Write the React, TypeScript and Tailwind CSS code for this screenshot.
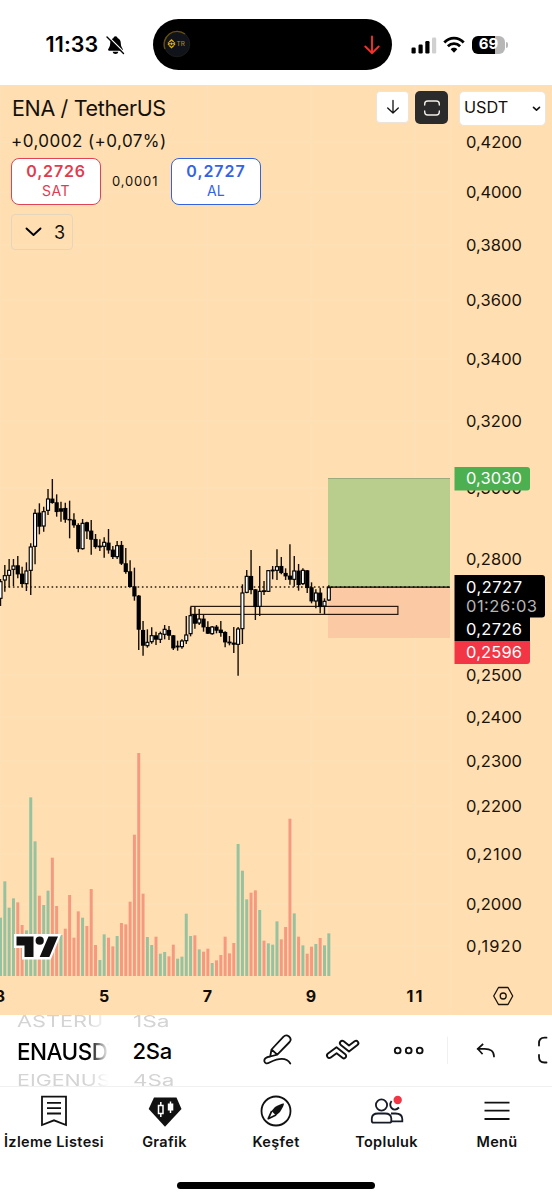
import React from "react";

type Bar = [number, number, number, number, 0 | 1];

const STEP = 4.32;
const barX = (i: number) => 0.5 + i * STEP;

// [high, body top, body bottom, low, rising], in thirds of a pixel
const firstLeg: Bar[] = [
  [357, 365, 415, 438, 1], [315, 347, 360, 395, 1], [297, 331, 346, 382, 1], [297, 318, 328, 378, 1],
  [288, 317, 342, 355, 0], [320, 342, 371, 380, 0], [307, 333, 371, 393, 1], [250, 261, 331, 405, 1],
  [148, 160, 259, 313, 1], [130, 159, 199, 223, 0], [140, 155, 198, 215, 1], [87, 117, 151, 165, 1],
  [57, 117, 128, 131, 0], [103, 128, 155, 170, 0], [125, 146, 154, 185, 0], [128, 145, 178, 188, 0],
  [122, 178, 180, 235, 0], [160, 180, 195, 203, 0], [190, 196, 266, 277, 0], [177, 190, 266, 269, 1],
  [185, 188, 213, 237, 0], [180, 213, 238, 284, 0], [222, 238, 260, 266, 0], [238, 258, 261, 273, 0],
  [232, 247, 259, 293, 1], [207, 249, 270, 281, 0], [258, 270, 290, 297, 0], [243, 257, 290, 297, 1],
  [243, 256, 310, 315, 0], [264, 311, 335, 341, 0], [301, 335, 380, 381, 0], [323, 380, 408, 422, 0],
  [405, 408, 508, 570, 0], [483, 511, 556, 587, 0], [508, 547, 557, 563, 1], [502, 527, 545, 551, 1],
  [515, 527, 538, 555, 0], [515, 521, 538, 549, 1], [495, 508, 523, 538, 1],
];
const secondLeg: Bar[] = [
  [318, 331, 346, 360, 0], [345, 347, 384, 390, 0], [362, 378, 381, 392, 0], [358, 363, 380, 386, 1],
  [288, 345, 362, 372, 1], [262, 287, 341, 349, 1], [258, 284, 310, 326, 0], [267, 297, 309, 315, 1],
  [284, 297, 321, 335, 0], [304, 322, 340, 342, 0], [318, 321, 341, 344, 1], [315, 321, 331, 340, 0],
  [303, 330, 338, 350, 0], [334, 337, 366, 382, 0], [348, 366, 369, 376, 0], [321, 369, 373, 399, 0],
  [321, 327, 373, 467, 1], [193, 219, 326, 372, 1], [150, 169, 217, 220, 1], [90, 169, 209, 223, 0],
  [207, 209, 260, 300, 0], [138, 214, 259, 288, 1], [183, 212, 215, 225, 0], [150, 152, 214, 216, 1],
  [138, 150, 153, 178, 0], [88, 140, 151, 180, 1], [111, 139, 158, 163, 0], [145, 160, 168, 180, 0],
  [73, 168, 178, 194, 0], [108, 153, 178, 200, 1], [132, 153, 194, 212, 0], [145, 151, 191, 195, 1],
  [150, 152, 203, 219, 0], [187, 203, 243, 250, 0], [208, 219, 243, 265, 1], [203, 219, 260, 280, 0],
  [235, 244, 258, 282, 1], [196, 203, 240, 243, 1],
];
const candles = [
  ...firstLeg.map((b) => ({ b, base: 460 })),
  ...secondLeg.map((b) => ({ b, base: 520 })),
];

const volumes =
  "g175 g284 g205 g233 r221 r153 g137 g536 g404 r241 g213 g256 r355 r210 g123 r142 r243 r115 r194 g175 r150 r261 r93 g48 g125 r115 r89 g120 r159 r155 r223 r424 r669 r247 g117 g93 r118 g67 g72 r59 r94 g52 g58 g187 g120 r122 g80 r73 r82 g39 r47 r63 r118 r68 r99 g396 g316 g230 r250 r257 g198 r106 g98 g94 g164 r110 r147 r472 g188 r118 g92 r67 r88 g96 r114 g92 g128"
    .split(" ")
    .map((v) => ({ up: v[0] === "g", h: Number(v.slice(1)) / 3 }));

const prices: [string, number][] = [
  ["0,4200", 142], ["0,4000", 192], ["0,3800", 245], ["0,3600", 300], ["0,3400", 359], ["0,3200", 421],
  ["0,3000", 488], ["0,2800", 558.5], ["0,2500", 675], ["0,2400", 717], ["0,2300", 761], ["0,2200", 806],
  ["0,2100", 854], ["0,2000", 904], ["0,1920", 946],
];

function PriceText({ y, children, fill = "#1c1208", w = 56 }: { y: number; children: string; fill?: string; w?: number }) {
  return (
    <text x="466" y={y + 6} fontSize="16.5" fill={fill} textLength={w}>
      {children}
    </text>
  );
}

function Chart() {
  return (
    <svg className="block h-[930px] w-[552px]" viewBox="0 85 552 930" fontFamily="Inter, sans-serif">
      <rect y="85" width="552" height="930" fill="#ffdfb2" />
      <g stroke="#fce1b8" strokeWidth="1">
        {[0, 103.5, 207.5, 311, 415].map((x) => <path key={x} d={`M${x} 85V976`} />)}
        {prices.map(([p, y]) => <path key={p} d={`M0 ${y}H450`} />)}
        <path d="M451 85V1015" />
      </g>
      {volumes.map((v, i) => (
        <rect key={i} x={barX(i) - 1.5} y={976 - v.h} width="3" height={v.h} fill={v.up ? "#97c29f" : "#f59a80"} />
      ))}
      <rect x="328" y="478" width="122" height="109" fill="#b9ce8d" />
      <path d="M328 478.5H450" stroke="#9cab7b" />
      <rect x="328" y="587" width="122" height="51" fill="#fbcaa5" />
      <path d="M0 587H450" stroke="#2a1c0c" strokeWidth="1.4" strokeDasharray="1.6 2.7" />
      <path d="M328 587.2H450" stroke="#000" strokeWidth="1.3" />
      <rect x="190.9" y="606.4" width="207" height="8" fill="none" stroke="#2a190c" strokeWidth="1.2" />
      {candles.map(({ b: [hi, top, bot, lo, up], base }, i) => {
        const x = barX(i);
        const y = (v: number) => base + v / 3;
        return (
          <g key={i}>
            <path d={`M${x} ${y(hi)}V${y(lo)}`} stroke="#160e04" strokeWidth="1.4" />
            {up ? (
              <rect x={x - 1.5} y={y(top)} width="3" height={Math.max(1.5, (bot - top) / 3)} fill="#fff" stroke="#000" strokeWidth="1.15" />
            ) : (
              <rect x={x - 2.1} y={y(top) - 0.4} width="4.2" height={Math.max(1.2, (bot - top) / 3 + 0.8)} fill="#000" />
            )}
          </g>
        );
      })}
      {prices.map(([p, y]) => <PriceText key={p} y={y}>{p}</PriceText>)}
      <path d="M454.500 467H527q3 0 3 3V487.500q0 3-3 3H454.500z" fill="#4caf50" />
      <path d="M454.500 641H530V661q0 3-3 3H454.500z" fill="#f23645" />
      <path d="M454.500 575H542q3 0 3 3V614.500q0 3-3 3H530V641H454.500z" fill="#000" />
      <PriceText y={478} fill="#fff">0,3030</PriceText>
      <PriceText y={586.5} fill="#fff">0,2727</PriceText>
      <PriceText y={605.5} fill="#b5b5b5" w={71}>01:26:03</PriceText>
      <PriceText y={629} fill="#fff">0,2726</PriceText>
      <PriceText y={652} fill="#fff">0,2596</PriceText>
      <g fontSize="16" fontWeight="700" fill="#120c04" textAnchor="middle">
        <text x="0" y="1002">3</text>
        <text x="104" y="1002">5</text>
        <text x="207.5" y="1002">7</text>
        <text x="311" y="1002">9</text>
        <text x="415.5" y="1002" letterSpacing="2">11</text>
      </g>
      <g fill="none" stroke="#1c140a" strokeWidth="1.3" strokeLinejoin="round">
        <path d="M498.500 987.500H508L512.700 996L508 1004.500H498.500L493.700 996Z" />
        <circle cx="503.200" cy="996" r="3" />
      </g>
      <path d="M14 934H61.300L50.800 959.500H22V948H14Z" fill="#fff" />
      <path d="M16.500 936.500H33.500V957H24.500V945.500H16.500ZM48.500 936.500H58L49.300 957H39.700Z" fill="#111" />
      <circle cx="39.700" cy="940.700" r="4.100" fill="#111" />
    </svg>
  );
}

function StatusBar() {
  return (
    <header className="flex h-[85px] items-start bg-white">
      <div className="mt-[19px] flex h-[51px] w-[153px] items-center pl-[45.500px]">
        <span className="w-[54.500px] whitespace-nowrap text-[21.500px] font-semibold tracking-[0.100px] text-black">11:33</span>
        <svg className="ml-[6px] h-[20px] w-[19px]" viewBox="0 0 19 20">
          <path d="M9.500 1.200C10.700 1.200 11.400 2 11.500 2.900C14 3.800 14.800 6 14.800 8.500C14.800 12 16.600 13.200 16.900 14.600C17 15.300 16.500 15.700 15.800 15.700H3.100C2.300 15.700 1.900 15.200 2.100 14.600C2.500 13.200 4.100 12 4.200 8.500C4.200 6 5 3.800 7.500 2.900C7.700 2 8.300 1.200 9.500 1.200ZM6.700 16.800H12.300C12 18.200 11 19 9.500 19S7 18.200 6.700 16.800Z" fill="#000" />
          <path d="M1.700 1L18.500 17.700" stroke="#fff" strokeWidth="1.300" />
          <path d="M1 2L17.500 18.500" stroke="#000" strokeWidth="1.400" strokeLinecap="round" />
        </svg>
      </div>
      <div className="mt-[19px] flex h-[51px] w-[239px] items-center justify-between rounded-full bg-black pl-[10px] pr-[12px]">
        <svg className="h-[28px] w-[28px] -translate-y-px" viewBox="0 0 28 28">
          <circle cx="14" cy="14" r="12.800" fill="#11131a" stroke="#1c1b1a" />
          <path d="M2 19A13 13 0 0 1 22 4" fill="none" stroke="#66500d" strokeWidth="1.400" />
          <path d="M6.300 12L8.500 9.800L10.700 12M6.300 15.500L8.500 17.700L10.700 15.500M5 12.500L6.300 13.800L5 15.100M12 12.500L10.700 13.800L12 15.100" fill="none" stroke="#e3b20a" strokeWidth="1.300" />
          <path d="M8.500 12.300L10 13.800L8.500 15.300L7 13.800Z" fill="#e3b20a" />
          <text x="13.600" y="16" fontSize="6.300" fontWeight="500" fontFamily="Inter, sans-serif" fill="#a88318">TR</text>
        </svg>
        <svg className="h-[20px] w-[16px]" viewBox="0 0 16 20" fill="none" stroke="#f5322b" strokeWidth="1.900" strokeLinecap="round" strokeLinejoin="round">
          <path d="M8 1.500V18.200M1.300 11.500L8 18.200L14.700 11.500" />
        </svg>
      </div>
      <div className="mt-[35px] flex h-[19px] items-center pl-[19px]">
        <svg className="h-[18px] w-[26px]" viewBox="0 0 26 18">
          <rect x="0.500" y="11.500" width="4.200" height="6" rx="1.200" />
          <rect x="7.500" y="8.500" width="4.200" height="9" rx="1.200" />
          <rect x="14.300" y="5" width="4.200" height="12.500" rx="1.200" />
          <rect x="21" y="1.500" width="4.200" height="16" rx="1.200" fill="#d0d0d0" />
        </svg>
        <svg className="ml-[6px] h-[18px] w-[22px]" viewBox="0 0 22 18" fill="none" stroke="#000" strokeWidth="2.700">
          <path d="M1.300 6.500C6.700 0.700 15.300 0.700 20.700 6.500M4.900 10.300C8.300 6.700 13.700 6.700 17.100 10.300" />
          <path d="M7.700 13.200C9.600 11.300 12.400 11.300 14.300 13.200L11 16.700Z" fill="#000" stroke="none" />
        </svg>
        <div className="ml-[7px] flex h-[18px] w-[33px] items-center justify-center rounded-[6px] bg-[linear-gradient(90deg,#000_69%,#b7b7b7_69%)] text-[15px] font-bold text-white">69</div>
        <div className="ml-[1px] h-[6px] w-[2px] rounded-r bg-[#b7b7b7]" />
      </div>
    </header>
  );
}

function ChartHeader() {
  return (
    <div className="absolute left-0 top-0 w-full text-[#15100a]">
      <div className="flex h-[48px] items-start pl-[12px] pt-[6px]">
        <h1 className="w-[364px] pt-[2px] text-[21.500px] leading-[30px] tracking-[-0.350px]">ENA / TetherUS</h1>
        <button className="flex h-[32px] w-[33px] items-center justify-center rounded-[4px] border border-[#ece4da] bg-white">
          <svg className="h-[16px] w-[14px]" viewBox="0 0 14 16" fill="none" stroke="#111" strokeWidth="1.300" strokeLinecap="round" strokeLinejoin="round">
            <path d="M7 1.500V14M1.700 9L7 14L12.300 9" />
          </svg>
        </button>
        <button className="ml-[6px] flex h-[33px] w-[33px] items-center justify-center rounded-[5px] bg-[#2b2b2b]">
          <svg className="h-[18px] w-[18px]" viewBox="0 0 18 18" fill="none" stroke="#f3eee7" strokeWidth="1.400" strokeLinecap="round">
            <path d="M1.700 6V5Q1.700 2 4.700 2H13.300Q16.300 2 16.300 5V6M1.700 12V13Q1.700 16 4.700 16H13.300Q16.300 16 16.300 13V12" />
          </svg>
        </button>
        <button className="ml-[11px] flex h-[35px] w-[87px] items-center justify-between rounded-[5px] border border-[#ebe5df] bg-white pl-[4px] pr-[4px] text-[16.300px]">
          <span className="-translate-y-px">USDT</span>
          <svg className="h-[6px] w-[9px]" viewBox="0 0 9 6" fill="none" stroke="#111" strokeWidth="1.600" strokeLinecap="round" strokeLinejoin="round">
            <path d="M1.500 1.400L4.500 4.200L7.500 1.400" />
          </svg>
        </button>
      </div>
      <div className="flex h-[25px] items-center pl-[11px] text-[17px] leading-5 tracking-[0.450px]">
        <span className="-translate-y-[5px]">+0,0002 (+0,07%)</span>
      </div>
      <div className="flex items-center pl-[11px]">
        <button className="flex h-[47px] w-[90px] flex-col items-center rounded-[8px] border-[1.500px] border-[#e04256] bg-white pt-[2px] text-[#e23b4f]">
          <span className="text-[16px] font-semibold leading-[21px] tracking-[0.800px]">0,2726</span>
          <span className="text-[14px] leading-[17px] tracking-[0.500px]">SAT</span>
        </button>
        <span className="w-[70px] pl-[11px] text-[13px] tracking-[0.850px]">0,0001</span>
        <button className="flex h-[47px] w-[90px] flex-col items-center rounded-[8px] border-[1.500px] border-[#3563de] bg-white pt-[2px] text-[#3563e2]">
          <span className="text-[16px] font-semibold leading-[21px] tracking-[0.950px]">0,2727</span>
          <span className="text-[14px] leading-[17px] tracking-[0.200px]">AL</span>
        </button>
      </div>
      <button className="ml-[11px] mt-[9px] flex h-[36px] w-[62px] items-center rounded-[4px] border-[1.500px] border-[#e6d5bd] pl-[13px] text-[18px]">
        <svg className="h-[10px] w-[17px]" viewBox="0 0 17 10" fill="none" stroke="#000" strokeWidth="1.900" strokeLinecap="round" strokeLinejoin="round">
          <path d="M1.500 1.500L8.500 8L15.500 1.500" />
        </svg>
        <span className="ml-[12px]">3</span>
      </button>
    </div>
  );
}

function Toolbar() {
  return (
    <div className="flex h-[72px] overflow-hidden border-b border-[#f0f0f0] bg-white">
      <div className="w-[109px] overflow-hidden pl-[17px] [mask-image:linear-gradient(90deg,#000_82%,transparent_100%)]">
        <div className="h-[14px] origin-left scale-x-[1.360] whitespace-nowrap text-[16px] leading-[12px] text-[#d4d4d4]">ASTERU</div>
        <div className="h-[44px] whitespace-nowrap text-[22.500px] font-medium leading-[45px] tracking-[-0.500px] text-black">ENAUSDT</div>
        <div className="origin-left scale-x-[1.340] whitespace-nowrap text-[16px] leading-[14px] text-[#d4d4d4]">EIGENUS</div>
      </div>
      <div className="w-[80px] pl-[23.500px]">
        <div className="h-[14px] origin-left scale-x-[1.420] text-[16px] leading-[12px] text-[#d4d4d4]">1Sa</div>
        <div className="h-[44px] text-[22px] font-medium leading-[45px] tracking-[-0.300px] text-black">2Sa</div>
        <div className="origin-left scale-x-[1.400] text-[16px] leading-[14px] text-[#d4d4d4]">4Sa</div>
      </div>
      <svg className="h-[71px] w-[363px]" viewBox="189 1015 363 71" fill="none" stroke="#111" strokeWidth="1.800" strokeLinecap="round" strokeLinejoin="round">
        <path d="M270.200 1056.500L271.500 1049.500L283.300 1036.800Q286 1034 289 1036.500Q292 1039.300 289.600 1042L277.300 1054.600ZM271.500 1049.500L277.300 1054.600M270.200 1056.500Q264 1057.500 264.300 1061Q265.200 1065 270 1062.300Q285 1055 290.300 1063.500" />
        <path d="M328 1053.600L336.500 1047.300L345.300 1054.200A2.300 2.300 0 0 1 342.400 1057.800L336.600 1053.200L330.800 1057.500A2.300 2.300 0 0 1 328 1053.600Z" strokeWidth="1.900" />
        <path d="M340.800 1044.900A2.300 2.300 0 0 1 343.700 1041.300L349 1045.500L354.600 1041.300A2.300 2.300 0 0 1 357.400 1045L349 1051.400Z" strokeWidth="1.900" />
        <g strokeWidth="1.900">
          <circle cx="397.700" cy="1050.500" r="2.900" /><circle cx="408.700" cy="1050.500" r="2.900" /><circle cx="419.700" cy="1050.500" r="2.900" />
        </g>
        <path d="M447.500 1037V1063.500" stroke="#f0f0f0" strokeWidth="1" />
        <path d="M482.500 1044.500L477.700 1048.800L482 1053.500M477.700 1048.800H484Q494 1048.500 494 1056.500" strokeLinecap="square" strokeWidth="1.700" />
        <path d="M546.500 1037.700H544.500Q539 1037.700 539 1043.500V1045.500M539 1055V1057Q539 1062.500 544.500 1062.500H546.500" />
      </svg>
    </div>
  );
}

function NavIcon({ kind }: { kind: string }) {
  return (
    <svg className="h-[36px] w-[40px]" viewBox="0 0 40 36" fill="none" stroke="#111" strokeWidth="1.800" strokeLinejoin="miter">
      {kind === "list" && <path d="M8 3.700H32V32L20 27.300L8 32ZM13 9.800H27M13 15.200H27M13 20.500H27" />}
      {kind === "chart" && (
        <>
          <path d="M9 4.500H31.500L36.500 16L20 33.800L3.700 16Z" fill="#111" stroke="none" />
          <path d="M13.500 12.500H18V20.500H13.500ZM15.800 9V12.500M15.800 20.500V24" stroke="#fff" strokeWidth="1.500" />
          <path d="M25.500 8.500V20" stroke="#fff" strokeWidth="1.500" />
          <rect x="22.800" y="10.500" width="5.500" height="7" fill="#fff" stroke="none" />
        </>
      )}
      {kind === "compass" && (
        <>
          <circle cx="20" cy="18" r="14.500" />
          <path d="M28 10.500Q26 9.800 19 14L15.500 18L20 22.500L24 19Q28 12.500 28 10.500Z" fill="#111" stroke="none" />
          <path d="M15.700 18L12.300 25.700L20 22" strokeLinejoin="round" />
        </>
      )}
      {kind === "people" && (
        <g stroke="#171b28">
          <circle cx="14.500" cy="12" r="5.600" />
          <path d="M4.800 28V25.500Q5 20.500 11 20.500H18Q24 20.500 24.300 25.500V28Q24.300 29.700 22.500 29.700H6.500Q4.800 29.700 4.800 28Z" />
          <path d="M24.600 8Q22 11.500 24.500 15Q28 18.500 32 14.500M24 20.500H28.500Q35 20.500 35.300 26V28.300H25" />
          <circle cx="30.700" cy="7" r="5" fill="#fff" stroke="none" />
          <circle cx="30.700" cy="7" r="4.200" fill="#f23645" stroke="none" />
        </g>
      )}
      {kind === "menu" && <path d="M7.500 9.700H32.500M7.500 17.700H32.500M7.500 26H32.500" />}
    </svg>
  );
}

const tabs: [string, string][] = [
  ["list", "İzleme Listesi"],
  ["chart", "Grafik"],
  ["compass", "Keşfet"],
  ["people", "Topluluk"],
  ["menu", "Menü"],
];

export default function App() {
  return (
    <div className="flex h-[1200px] w-[552px] flex-col overflow-hidden bg-white font-['Inter',sans-serif]">
      <StatusBar />
      <main className="relative h-[930px]">
        <Chart />
        <ChartHeader />
      </main>
      <Toolbar />
      <nav className="grid h-[95px] grid-cols-[108px_113px_110px_111px_110px] pt-[6px]">
        {tabs.map(([kind, label]) => (
          <a key={kind} className="flex flex-col items-center whitespace-nowrap text-[14.500px] font-semibold leading-[22px] tracking-[0.350px] text-[#111]">
            <NavIcon kind={kind} />
            <span className="mt-[2px]">{label}</span>
          </a>
        ))}
      </nav>
      <div className="mx-auto h-[7px] w-[198px] rounded-full bg-black" />
    </div>
  );
}
